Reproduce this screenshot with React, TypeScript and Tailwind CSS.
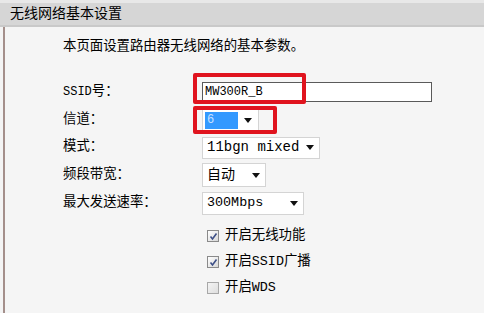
import React from "react";

const font = "font-['Liberation_Mono','Noto_Sans_CJK_SC',monospace]";

function Arrow() {
  return (
    <svg width="8" height="5" viewBox="0 0 8 5" className="shrink-0">
      <path d="M0 0 L8 0 L4 5 Z" fill="#111" />
    </svg>
  );
}

function Select({
  width,
  height,
  children,
}: {
  width: string;
  height: string;
  children: React.ReactNode;
}) {
  return (
    <div
      className={`${width} ${height} flex items-center justify-between bg-white border border-[#d4d4d4] pl-[4px] pr-[5px]`}
    >
      {children}
      <Arrow />
    </div>
  );
}

function Checkbox({ checked }: { checked: boolean }) {
  return (
    <span
      className={`w-[12px] h-[12px] flex items-center justify-center border ${
        checked
          ? "border-[#8a8a8a] bg-gradient-to-br from-[#ffffff] to-[#d8d8d8]"
          : "border-[#a8a8a8] bg-gradient-to-br from-[#f4f4f4] to-[#dedede]"
      }`}
    >
      {checked && (
        <svg width="9" height="9" viewBox="0 0 9 9">
          <path
            d="M1.5 4.5 L3.5 7 L7.5 1.5"
            stroke="#3d4f86"
            strokeWidth="1.6"
            fill="none"
          />
        </svg>
      )}
    </span>
  );
}

export default function App() {
  return (
    <div
      className={`relative w-[484px] h-[313px] overflow-hidden bg-[#f4f4f4] text-black ${font}`}
    >
      {/* Header */}
      <div className="h-[27px] border-t-[3px] border-[#e8e8e8] bg-[#d6d6d6] border-b-2 border-b-[#c9c9c9] flex items-center pl-[10px] text-[14px] leading-none">
        无线网络基本设置
      </div>

      {/* Body */}
      <div className="ml-[3px] h-[286px] border-l-2 border-[#a48f8b] bg-[#f5f5f5] pl-[58px] pt-[11px]">
        <div className="h-[18px] flex items-center text-[13.4px]">
          本页面设置路由器无线网络的基本参数。
        </div>

        <div className="mt-[22px] grid grid-cols-[139px_auto] text-[13.4px]">
          {/* SSID */}
          <div className="h-[28px] flex items-center">
            <span className="text-[12px]">SSID</span>号：
          </div>
          <div className="h-[28px] flex items-center">
            <div className="w-[230px] h-[20px] bg-white border border-[#5a5a5a] flex items-center pl-[2px] text-[12px]">
              MW300R_B
            </div>
          </div>

          {/* Channel */}
          <div className="h-[28px] flex items-center">信道：</div>
          <div className="h-[28px] flex items-center">
            <div className="w-[57px] h-[22px] flex items-center justify-between bg-white border border-[#d4d4d4] pl-[2px] pr-[6px]">
              <span className="w-[33px] h-[17px] bg-[#3399ff] text-[#c9e0ff] text-[12px] flex items-center pl-[2px]">
                6
              </span>
              <Arrow />
            </div>
          </div>

          {/* Mode */}
          <div className="h-[27px] flex items-center">模式：</div>
          <div className="h-[27px] flex items-center">
            <Select width="w-[118px]" height="h-[22px]">
              <span className="text-[14px]">11bgn mixed</span>
            </Select>
          </div>

          {/* Bandwidth */}
          <div className="h-[28px] flex items-center">频段带宽：</div>
          <div className="h-[28px] flex items-center">
            <Select width="w-[64px]" height="h-[24px]">
              <span className="text-[14px]">自动</span>
            </Select>
          </div>

          {/* Rate */}
          <div className="h-[28px] flex items-center">最大发送速率：</div>
          <div className="h-[28px] flex items-center">
            <Select width="w-[102px]" height="h-[23px]">
              <span className="text-[13.4px]">300Mbps</span>
            </Select>
          </div>

          {/* Checkboxes */}
          <div />
          <div className="pt-[6px] flex flex-col pl-[5px]">
            <label className="h-[26px] flex items-center gap-[6px]">
              <Checkbox checked />
              <span>开启无线功能</span>
            </label>
            <label className="h-[26px] flex items-center gap-[6px]">
              <Checkbox checked />
              <span>开启SSID广播</span>
            </label>
            <label className="h-[26px] flex items-center gap-[6px]">
              <Checkbox checked={false} />
              <span>开启WDS</span>
            </label>
          </div>
        </div>
      </div>

      {/* Red annotation boxes */}
      <div className="absolute left-[193px] top-[73px] w-[113px] h-[31px] border-4 border-[#e0141e] rounded-[2px]" />
      <div className="absolute left-[193px] top-[106px] w-[84px] h-[28px] border-4 border-[#e0141e] rounded-[2px]" />
    </div>
  );
}
